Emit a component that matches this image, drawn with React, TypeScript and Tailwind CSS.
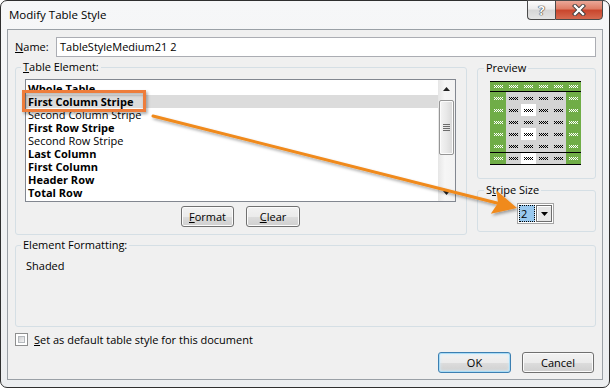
import React from "react";

function Mark({ c }: { c: string }) {
  const top = [0, 2, 4, 6, 8];
  const mid = [1, 3, 5, 7];
  return (
    <svg width="9" height="3" viewBox="0 0 9 3" shapeRendering="crispEdges">
      {top.map((x) => (
        <rect key={"a" + x} x={x} y={0} width={1} height={1} fill={c} />
      ))}
      {mid.map((x) => (
        <rect key={"b" + x} x={x} y={1} width={1} height={1} fill={c} />
      ))}
      {top.map((x) => (
        <rect key={"c" + x} x={x} y={2} width={1} height={1} fill={c} />
      ))}
    </svg>
  );
}

const COLW = ["w-[16px]", "w-[15px]", "w-[15px]", "w-[15px]", "w-[15px]", "w-[15px]"];

function PRow({ kind, idx, h }: { kind: "h" | "b" | "t"; idx: number; h: string }) {
  return (
    <div className={"flex " + h}>
      {COLW.map((w, c) => {
        let bg = "bg-[#d4d4d4]";
        let mc = "#000";
        if (kind === "h" || c === 0 || c === 5) {
          bg = "bg-[#70ad47]";
          mc = "#fff";
        } else if (c === 2 && ((kind === "b" && (idx === 1 || idx === 3)) || kind === "t")) {
          bg = "bg-white";
        }
        return (
          <div key={c} className={w + " h-full flex items-center justify-center " + bg}>
            <Mark c={mc} />
          </div>
        );
      })}
    </div>
  );
}

function Preview() {
  return (
    <div className="w-[91px] flex flex-col">
      <div className="h-[1px] bg-black" />
      <PRow kind="h" idx={0} h="h-[9px]" />
      <div className="h-[1px] bg-black" />
      {[0, 1, 2, 3, 4].map((i) => (
        <PRow key={i} kind="b" idx={i} h="h-[12px]" />
      ))}
      <div className="h-[1px] bg-black" />
      <PRow kind="t" idx={0} h="h-[11px]" />
      <div className="h-[1px] bg-black" />
    </div>
  );
}

function WinButton({ children, w, def }: { children: React.ReactNode; w: string; def?: boolean }) {
  return (
    <div
      className={
        w +
        " h-[21px] rounded-[3px] border flex items-center justify-center leading-[14px] bg-[linear-gradient(180deg,#f2f2f2_0%,#ebebeb_50%,#dddddd_50%,#cfcfcf_100%)] " +
        (def
          ? "border-[#3c7fb1] shadow-[inset_0_0_0_1px_#a9dcf6,inset_0_0_3px_1px_#d2efff]"
          : "border-[#707070] shadow-[inset_0_0_0_1px_#fbfbfb]")
      }
    >
      {children}
    </div>
  );
}

const items: [string, boolean][] = [
  ["Whole Table", true],
  ["First Column Stripe", true],
  ["Second Column Stripe", false],
  ["First Row Stripe", true],
  ["Second Row Stripe", false],
  ["Last Column", true],
  ["First Column", true],
  ["Header Row", true],
  ["Total Row", true],
];

export default function App() {
  return (
    <div className="relative w-[610px] h-[388px] overflow-hidden bg-white font-['Open_Sans',sans-serif] text-[11px] text-black">
      <div className="w-[610px] h-[388px] rounded-[7px] border border-[#2f2f2f] bg-[linear-gradient(180deg,#f6f7f8_0%,#eceef0_100%)] flex flex-col">
        {/* title bar */}
        <div className="h-[28px] shrink-0 flex items-start">
          <div className="pl-[8px] pt-[5px] text-[11.5px] leading-[18px]">Modify Table Style</div>
          <div className="ml-auto mr-[6px] -mt-[1px] flex h-[20px]">
            <div className="w-[28px] h-[20px] border border-r-0 border-[#4a4a4a] rounded-bl-[4px] bg-[linear-gradient(180deg,#fdfdfd_0%,#ebebeb_45%,#d6d6d6_50%,#e4e4e4_100%)] flex items-center justify-center">
              <span className="text-[13px] font-bold leading-[13px] text-white [text-shadow:0_0_1px_#333,0_0_1px_#333,0_0_1px_#333]">?</span>
            </div>
            <div className="w-[48px] h-[20px] border border-[#4a4a4a] rounded-br-[4px] bg-[linear-gradient(180deg,#eaa898_0%,#dd7b64_45%,#c9452c_50%,#d66a50_100%)] flex items-center justify-center">
              <svg width="14" height="12" viewBox="0 0 14 12">
                <path d="M3 2 L11 10 M11 2 L3 10" stroke="#3a3a3a" strokeWidth="4.2" strokeLinecap="square" />
                <path d="M3 2 L11 10 M11 2 L3 10" stroke="#fff" strokeWidth="2.4" strokeLinecap="square" />
              </svg>
            </div>
          </div>
        </div>

        {/* client area */}
        <div className="mx-[6px] h-[351px] border border-[#9aa0a6] bg-[#f0f0f0] flex flex-col">
          {/* Name row */}
          <div className="mt-[7px] h-[20px] pl-[7px] flex items-center">
            <span className="w-[41px] leading-[14px]">
              <u>N</u>ame:
            </span>
            <div className="w-[540px] h-[20px] border border-[#abadb3] bg-white pl-[3px] leading-[18px]">
              TableStyleMedium21 2
            </div>
          </div>

          {/* middle */}
          <div className="mt-[3px] flex">
            <fieldset className="ml-[7px] w-[452px] h-[175px] border border-[#d5dfe5] rounded-[3px] p-0 m-0">
              <legend className="ml-[5px] px-[2px] leading-[14px]">
                <u>T</u>able Element:
              </legend>
              <div className="ml-[9px] mt-[5px] w-[431px] h-[123px] border border-[#828790] bg-white flex">
                <div className="flex-1 pt-[2px] overflow-hidden">
                  {items.map(([t, b], i) => (
                    <div
                      key={t}
                      className={
                        "h-[13px] leading-[13px] pl-[2px] whitespace-nowrap " +
                        (b ? "font-bold " : "") +
                        (i === 1 ? "bg-[#dcdcdc]" : "")
                      }
                    >
                      {t}
                    </div>
                  ))}
                </div>
                <div className="w-[17px] h-full bg-[linear-gradient(90deg,#e6e6e6_0%,#f6f6f6_40%,#f2f2f2_100%)] flex flex-col items-center">
                  <div className="h-[17px] flex items-center justify-center">
                    <svg width="7" height="4" viewBox="0 0 7 4">
                      <path d="M0 4 L3.5 0 L7 4 Z" fill="#222" />
                    </svg>
                  </div>
                  <div className="mt-[3px] w-[15px] h-[55px] rounded-[2px] border border-[#959595] bg-[linear-gradient(90deg,#f4f4f4_0%,#e8e8e8_50%,#d8d8d8_100%)] shadow-[inset_0_0_0_1px_#fbfbfb] flex flex-col items-center justify-center gap-[1px]">
                    <div className="w-[7px] h-[1px] bg-[#6c6c6c]" />
                    <div className="w-[7px] h-[1px] bg-[#6c6c6c]" />
                    <div className="w-[7px] h-[1px] bg-[#6c6c6c]" />
                    <div className="w-[7px] h-[1px] bg-[#6c6c6c]" />
                  </div>
                  <div className="flex-1" />
                  <div className="h-[17px] flex items-center justify-center">
                    <svg width="7" height="4" viewBox="0 0 7 4">
                      <path d="M0 0 L3.5 4 L7 0 Z" fill="#222" />
                    </svg>
                  </div>
                </div>
              </div>
              <div className="ml-[9px] mt-[4px] w-[431px] flex justify-center gap-[12px]">
                <WinButton w="w-[53px]">
                  <span>
                    <u>F</u>ormat
                  </span>
                </WinButton>
                <WinButton w="w-[54px]">
                  <span>
                    <u>C</u>lear
                  </span>
                </WinButton>
              </div>
            </fieldset>

            <div className="ml-[10px] w-[119px] flex flex-col">
              <fieldset className="mt-[1px] w-[119px] h-[118px] border border-[#d5dfe5] rounded-[3px] p-0 m-0">
                <legend className="ml-[6px] px-[2px] leading-[14px]">Preview</legend>
                <div className="ml-[12px] mt-[6px]">
                  <Preview />
                </div>
              </fieldset>
              <fieldset className="mt-[4px] w-[119px] h-[49px] border border-[#d5dfe5] rounded-[3px] p-0 m-0">
                <legend className="ml-[6px] px-[2px] leading-[14px]">
                  S<u>t</u>ripe Size
                </legend>
                <div className="ml-[39px] mt-[6px] w-[37px] h-[21px] border border-[#a5a5a5] bg-white p-[1px] flex items-center">
                  <div className="w-[16px] h-[17px] bg-[#99c9ef] border border-dotted border-black leading-[15px] pl-[1px]">
                    2
                  </div>
                  <div className="ml-auto w-[16px] h-[17px] border border-[#6f6f6f] bg-[#e6e6e6] shadow-[inset_1px_1px_0_#ffffff] flex items-center justify-center">
                    <svg width="7" height="4" viewBox="0 0 7 4">
                      <path d="M0 0 L3.5 4 L7 0 Z" fill="#000" />
                    </svg>
                  </div>
                </div>
              </fieldset>
            </div>
          </div>

          {/* element formatting */}
          <fieldset className="mt-[3px] ml-[7px] w-[581px] h-[89px] border border-[#d5dfe5] rounded-[3px] p-0 m-0">
            <legend className="ml-[5px] px-[2px] leading-[14px]">Element Formatting:</legend>
            <div className="mt-[7px] pl-[10px] leading-[14px]">Shaded</div>
          </fieldset>

          {/* checkbox */}
          <div className="mt-[6px] ml-[7px] flex items-center h-[13px]">
            <div className="w-[13px] h-[13px] border border-[#8e8f8f] bg-white p-[2px]">
              <div className="w-full h-full border border-[#b5b9bd] bg-[linear-gradient(135deg,#cfd0d2_0%,#f4f4f4_100%)]" />
            </div>
            <span className="ml-[6px] leading-[14px]">
              <u>S</u>et as default table style for this document
            </span>
          </div>

          {/* buttons */}
          <div className="mt-[6px] pr-[8px] flex justify-end gap-[11px]">
            <WinButton w="w-[73px]" def>
              OK
            </WinButton>
            <WinButton w="w-[72px]">Cancel</WinButton>
          </div>
        </div>
      </div>

      {/* annotation overlay */}
      <svg className="absolute inset-0 pointer-events-none" width="610" height="388" viewBox="0 0 610 388">
        <defs>
          <filter id="sh" x="-10%" y="-30%" width="120%" height="160%">
            <feDropShadow dx="1.5" dy="2" stdDeviation="1.5" floodColor="#000" floodOpacity="0.35" />
          </filter>
        </defs>
        <rect x="23.5" y="91.5" width="121" height="19" fill="none" stroke="#ee7d3b" strokeWidth="3" filter="url(#sh)" />
        <g filter="url(#sh)">
          <line x1="153" y1="116" x2="497" y2="203" stroke="#f08a1c" strokeWidth="3" strokeLinecap="round" />
          <polygon points="517,208 496.5,190.5 498,203 490.8,213.7" fill="#f08a1c" />
        </g>
      </svg>
    </div>
  );
}
